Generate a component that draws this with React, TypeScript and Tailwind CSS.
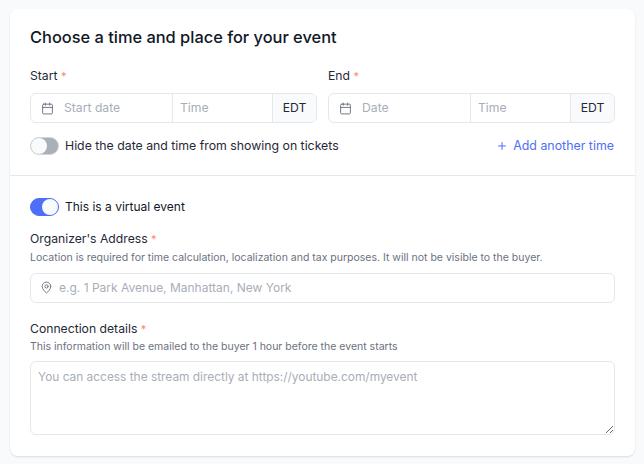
import { Calendar, MapPin, Plus } from 'lucide-react';

function Label({ text }: { text: string }) {
  return (
    <label className="block text-[12.2px] leading-[18px] text-[#1f2937]">
      {text} <span className="text-[11px] text-[#fb8a6c]">*</span>
    </label>
  );
}

function Toggle({ on }: { on: boolean }) {
  return (
    <button
      className={`flex h-[18px] w-[29px] items-center rounded-full border ${
        on ? 'justify-end border-[#4f6ef7] bg-[#4f6ef7]' : 'justify-start border-[#d1d5db] bg-[#a9b0b9]'
      }`}
    >
      <span className="h-4 w-4 rounded-full bg-[#f9fafb]" />
    </button>
  );
}

function DateTimeField({ label, datePlaceholder }: { label: string; datePlaceholder: string }) {
  return (
    <div className="w-[287px]">
      <Label text={label} />
      <div className="mt-2 flex h-[30px] overflow-hidden rounded-md border border-[#e5e7eb] bg-white text-[12.2px]">
        <div className="flex w-[142px] items-center border-r border-[#e5e7eb] pl-[10px]">
          <Calendar className="h-[13px] w-[13px] shrink-0 text-[#6b7280]" strokeWidth={1.75} />
          <input className="ml-[10px] w-full outline-none placeholder:text-[#a8aeb8]" placeholder={datePlaceholder} />
        </div>
        <div className="flex w-[100px] items-center border-r border-[#e5e7eb] pl-[7px]">
          <input className="w-full outline-none placeholder:text-[#a8aeb8]" placeholder="Time" />
        </div>
        <div className="flex flex-1 items-center justify-center bg-[#f9fafb] pt-[1px] text-[#1f2937]">EDT</div>
      </div>
    </div>
  );
}

export default function App() {
  return (
    <div className="h-[464px] w-[644px] overflow-hidden bg-[#f9fafb] pl-[10px] pt-[9px] font-['Inter',sans-serif]">
      <div className="h-[447px] w-[625px] rounded-lg bg-white shadow-[0_1px_2px_rgba(0,0,0,0.12)]">
        {/* Date and time */}
        <section className="h-[167px] border-b border-[#e5e7eb] px-5 pt-[18px]">
          <h2 className="text-[16.4px] font-medium leading-5 text-[#111827]">Choose a time and place for your event</h2>
          <div className="mt-[20px] flex justify-between">
            <DateTimeField label="Start" datePlaceholder="Start date" />
            <DateTimeField label="End" datePlaceholder="Date" />
          </div>
          <div className="mt-[14px] flex items-center justify-between">
            <div className="flex items-center gap-[6px] text-[12.3px] text-[#1f2937]">
              <Toggle on={false} />
              Hide the date and time from showing on tickets
            </div>
            <a className="flex items-center gap-[5px] pr-[1px] text-[12.4px] text-[#4f6ef7]">
              <Plus className="h-[12px] w-[12px]" strokeWidth={2} />
              Add another time
            </a>
          </div>
        </section>

        {/* Virtual event */}
        <section className="px-5 pt-[22px]">
          <div className="flex items-center gap-[6px] text-[12px] text-[#111827]">
            <Toggle on={true} />
            This is a virtual event
          </div>
          <div className="mt-[14px]">
            <Label text="Organizer's Address" />
            <p className="mt-[2px] text-[10.5px] leading-[16px] text-[#6b7280]">
              Location is required for time calculation, localization and tax purposes. It will not be visible to the buyer.
            </p>
            <div className="mt-[7px] flex h-[30px] items-center rounded-md border border-[#e5e7eb] pb-[1px] pl-[9px] text-[12px]">
              <MapPin className="h-[13px] w-[13px] shrink-0 text-[#6b7280]" strokeWidth={1.75} />
              <input className="ml-[6px] w-full outline-none placeholder:text-[#a8aeb8]" placeholder="e.g. 1 Park Avenue, Manhattan, New York" />
            </div>
          </div>
          <div className="mt-[17px]">
            <Label text="Connection details" />
            <p className="mt-[1px] text-[10.5px] leading-[16px] text-[#6b7280]">
              This information will be emailed to the buyer 1 hour before the event starts
            </p>
            <textarea
              className="mt-[6px] block h-[74px] w-full rounded-md border border-[#e5e7eb] px-[7px] py-[6px] text-[11.9px] outline-none placeholder:text-[#a8aeb8]"
              placeholder="You can access the stream directly at https://youtube.com/myevent"
            />
          </div>
        </section>
      </div>
    </div>
  );
}
